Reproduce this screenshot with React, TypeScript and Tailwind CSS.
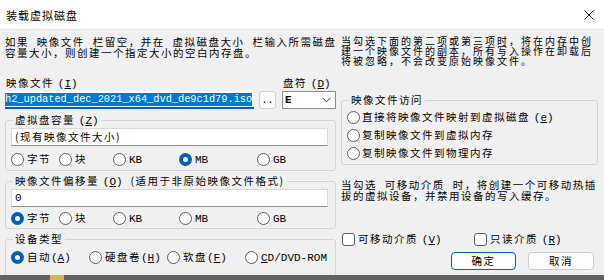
import type { ReactNode } from "react"

const cjk = "font-['Noto_Sans_CJK_SC',sans-serif]"
const mono = "font-['Liberation_Mono','Noto_Sans_CJK_SC',monospace] tracking-normal"

function Key({ k }: { k: string }) {
  return (
    <span className={`${mono} text-[11px] leading-[10px]`}>
      (<span className="underline underline-offset-1">{k}</span>)
    </span>
  )
}

function Radio({ on }: { on?: boolean }) {
  return on ? (
    <span className="flex h-[13px] w-[13px] shrink-0 items-center justify-center rounded-full bg-[#005fb8]">
      <span className="h-[5px] w-[5px] rounded-full bg-white" />
    </span>
  ) : (
    <span className="h-[13px] w-[13px] shrink-0 rounded-full border border-[#5a5a5a] bg-white" />
  )
}

function Check() {
  return <span className="h-[13px] w-[13px] shrink-0 rounded-[3px] border border-[#5a5a5a] bg-white" />
}

function Opt({ on, w, children }: { on?: boolean; w: string; children: ReactNode }) {
  return (
    <div className={`flex h-[14px] items-center gap-[3px] ${w}`}>
      <Radio on={on} />
      <span className="whitespace-nowrap leading-[12px]">{children}</span>
    </div>
  )
}

function Group({ title, className, children }: { title: ReactNode; className?: string; children: ReactNode }) {
  return (
    <fieldset className={`rounded-[3px] border border-[#d5d5d5] ${className ?? ""}`}>
      <legend className="ml-[7px] h-[12px] whitespace-nowrap px-[2px] leading-[12px]">{title}</legend>
      {children}
    </fieldset>
  )
}

function Units({ sel }: { sel: number }) {
  const items: ReactNode[] = [
    "字节",
    "块",
    <span className={`${mono} text-[11px]`}>KB</span>,
    <span className={`${mono} text-[11px]`}>MB</span>,
    <span className={`${mono} text-[11px]`}>GB</span>,
  ]
  const widths = ["w-[48px]", "w-[54px]", "w-[66px]", "w-[78px]", "w-[60px]"]
  return (
    <div className="flex h-[14px] pl-[5px]">
      {items.map((it, i) => (
        <Opt key={i} on={i === sel} w={widths[i]}>
          {it}
        </Opt>
      ))}
    </div>
  )
}

function Field({ children, className }: { children: ReactNode; className?: string }) {
  return (
    <div
      className={`mx-[5px] mt-[2px] flex h-[18px] w-[317px] items-center border border-[#d9d9d9] border-b-[#8d8d8d] bg-white pl-[3px] leading-[12px] ${className ?? ""}`}
    >
      {children}
    </div>
  )
}

export default function App() {
  return (
    <div
      className={`${cjk} relative flex h-[280px] w-[604px] flex-col overflow-hidden bg-[#f0f0f0] text-[10.5px] tracking-[1.5px] text-black`}
    >
      {/* title bar */}
      <div className="flex h-[30px] shrink-0 items-center justify-between border-b border-[#e6e6e6] bg-white pl-[6px] pr-[10px]">
        <span className="pt-[1px] text-[11px] leading-[12px] tracking-[1px]">装载虚拟磁盘</span>
        <svg width="10" height="10" viewBox="0 0 10 10" className="mt-[1px]">
          <path d="M0.5 0.5 L9.5 9.5 M9.5 0.5 L0.5 9.5" stroke="#1a1a1a" strokeWidth="1" />
        </svg>
      </div>

      <div className="flex flex-1 pl-[5px]">
        {/* left column */}
        <div className="flex w-[331px] flex-col">
          <p className="mt-[7px] h-[21px] whitespace-nowrap leading-[10.5px] [word-spacing:4px]">
            如果 映像文件 栏留空，并在 虚拟磁盘大小 栏输入所需磁盘
            <br />
            容量大小，则创建一个指定大小的空白内存盘。
          </p>

          <div className="mt-[19px] flex h-[12px] leading-[12px]">
            <span className="flex-1 pl-[1px]">
              映像文件 <Key k="I" />
            </span>
            <span className="w-[53px] whitespace-nowrap">
              盘符 <Key k="D" />
            </span>
          </div>

          <div className="mt-[2px] flex h-[18px] items-stretch">
            <div className="flex w-[249px] items-center border-b-2 border-[#005fb8] bg-white">
              <span className={`${mono} bg-[#0078d7] text-[10.3px] leading-[13px] text-white`}>
                h2_updated_dec_2021_x64_dvd_de9c1d79.iso
              </span>
            </div>
            <div
              className={`${mono} ml-[5px] flex w-[17px] items-end justify-center rounded-[3px] border border-[#cfcfcf] bg-[#fbfbfb] pb-[2px] text-[10px] leading-[10px]`}
            >
              ..
            </div>
            <div className="ml-[6px] flex w-[54px] items-center justify-between border border-[#8a8a8a] bg-white pl-[2px] pr-[4px]">
              <span className={`${mono} text-[11px] font-bold leading-[12px]`}>E</span>
              <svg width="9" height="6" viewBox="0 0 9 6">
                <path d="M0.5 0.8 L4.5 4.8 L8.5 0.8" fill="none" stroke="#333" strokeWidth="1" />
              </svg>
            </div>
          </div>

          <Group
            className="mt-[5px] pb-[4px]"
            title={
              <>
                虚拟盘容量 <Key k="Z" />
              </>
            }
          >
            <Field>(现有映像文件大小)</Field>
            <div className="mt-[6px]">
              <Units sel={3} />
            </div>
          </Group>

          <Group
            className="mt-[4px] pb-[3px]"
            title={
              <>
                映像文件偏移量 <Key k="O" />
                &nbsp;&nbsp;(适用于非原始映像文件格式)
              </>
            }
          >
            <Field className={`${mono} text-[11px]`}>0</Field>
            <div className="mt-[4px]">
              <Units sel={0} />
            </div>
          </Group>

          <Group className="mt-[4px] pb-[12px]" title="设备类型">
            <div className="mt-[5px] flex h-[14px] pl-[5px]">
              <Opt on w="w-[78px]">
                自动<Key k="A" />
              </Opt>
              <Opt w="w-[78px]">
                硬盘卷<Key k="H" />
              </Opt>
              <Opt w="w-[78px]">
                软盘<Key k="F" />
              </Opt>
              <Opt w="w-[90px]">
                <span className={`${mono} text-[11px]`}>
                  <span className="underline underline-offset-1">C</span>D/DVD-ROM
                </span>
              </Opt>
            </div>
          </Group>
        </div>

        {/* right column */}
        <div className="ml-[5px] flex w-[257px] flex-col">
          <p className="mt-[6px] h-[30px] whitespace-nowrap text-[10px] leading-[10px] tracking-[2px]">
            当勾选下面的第二项或第三项时，将在内存中创
            <br />
            建一个映像文件的副本，所有写入操作在卸载后
            <br />
            将被忽略，不会改变原始映像文件。
          </p>

          <Group className="mt-[28px] pb-[2px]" title="映像文件访问">
            <div className="mt-[2px] flex flex-col pl-[5px]">
              <div className="flex h-[18px] items-center gap-[2px]">
                <Radio />
                <span className="leading-[12px]">
                  直接将映像文件映射到虚拟磁盘 <Key k="e" />
                </span>
              </div>
              <div className="flex h-[18px] items-center gap-[2px]">
                <Radio />
                <span className="leading-[12px]">复制映像文件到虚拟内存</span>
              </div>
              <div className="flex h-[18px] items-center gap-[2px]">
                <Radio />
                <span className="leading-[12px]">复制映像文件到物理内存</span>
              </div>
            </div>
          </Group>

          <p className="mt-[15px] h-[21px] whitespace-nowrap leading-[10.5px] [word-spacing:4px]">
            当勾选 可移动介质 时，将创建一个可移动热插
            <br />
            拔的虚拟设备，并禁用设备的写入缓存。
          </p>

          <div className="mt-[31px] flex h-[14px] items-center pl-[1px]">
            <div className="flex w-[132px] items-center gap-[3px]">
              <Check />
              <span className="leading-[12px]">
                可移动介质 <Key k="V" />
              </span>
            </div>
            <div className="flex items-center gap-[3px]">
              <Check />
              <span className="leading-[12px]">
                只读介质 <Key k="R" />
              </span>
            </div>
          </div>

          <div className="mt-[6px] flex justify-end gap-[12px] pr-[4px]">
            <div className="flex h-[18px] w-[65px] items-center justify-center rounded-[4px] border border-[#005fb8] bg-[#fdfdfd] leading-[12px]">
              确定
            </div>
            <div className="flex h-[18px] w-[66px] items-center justify-center rounded-[4px] border border-[#cccccc] bg-[#fdfdfd] leading-[12px]">
              取消
            </div>
          </div>
        </div>
      </div>

      {/* window behind, peeking out at the bottom */}
      <div className="absolute bottom-0 left-0 flex h-[5px] w-full items-start bg-[#626262]">
        <span className="ml-[50px] h-[5px] w-[14px] bg-[#d9b24c]" />
      </div>
    </div>
  )
}
